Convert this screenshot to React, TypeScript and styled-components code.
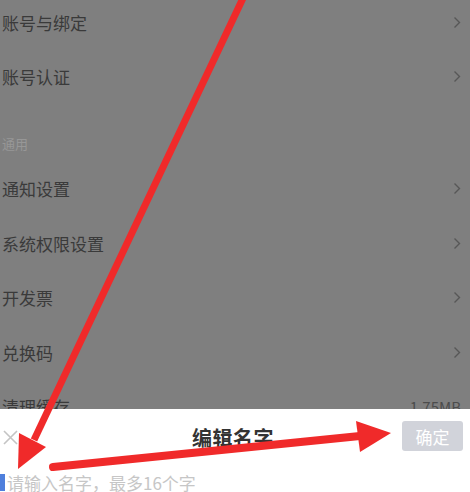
import React from 'react'
import styled, { createGlobalStyle } from 'styled-components'

const GlobalStyle = createGlobalStyle`
  html, body {
    margin: 0;
    padding: 0;
  }
  body {
    font-family: "Noto Sans CJK SC", "Noto Sans", sans-serif;
    background: #7f7f7f;
  }
`

const Screen = styled.div`
  position: relative;
  width: 470px;
  height: 492px;
  overflow: hidden;
  background: #7f7f7f;
`

const List = styled.div`
  display: flex;
  flex-direction: column;
  margin-top: -5px;
`

const Row = styled.div`
  display: flex;
  align-items: center;
  justify-content: space-between;
  height: 54.5px;
  padding: 0 9px 0 2px;
  font-size: 17px;
  color: #3a3a3a;
`

const Section = styled.div`
  height: 57.5px;
  box-sizing: border-box;
  padding: 31px 0 0 2px;
  font-size: 13px;
  line-height: 18px;
  color: #979797;
`

const Extra = styled.span`
  font-size: 15px;
  color: #4c4c4c;
`

const Chevron = () => (
  <svg width="8" height="13" viewBox="0 0 8 13">
    <path d="M1.5 1.5 L6.5 6.5 L1.5 11.5" fill="none" stroke="#575757" strokeWidth="1.4" />
  </svg>
)

const Sheet = styled.div`
  position: absolute;
  left: 0;
  right: 0;
  top: 409px;
  bottom: 0;
  background: #fff;
  display: flex;
  flex-direction: column;
`

const SheetHeader = styled.div`
  display: grid;
  grid-template-columns: 1fr auto 1fr;
  align-items: center;
  height: 56px;
  padding: 0 7px 0 3px;
`

const Close = styled.div`
  display: flex;
  align-items: center;
`

const Title = styled.div`
  font-size: 20px;
  font-weight: 700;
  color: #333;
  letter-spacing: 0.5px;
`

const Confirm = styled.button`
  justify-self: end;
  width: 61px;
  height: 30px;
  border: none;
  border-radius: 3px;
  background: #d1d3da;
  color: #fff;
  font-family: inherit;
  font-size: 17px;
  padding: 0;
  margin-top: -2px;
`

const InputRow = styled.div`
  display: flex;
  align-items: center;
  height: 20px;
  margin-top: 7px;
`

const Caret = styled.span`
  width: 5px;
  height: 17px;
  background: #4f7fdc;
`

const Placeholder = styled.span`
  font-size: 17px;
  color: #c6c6c6;
  margin-left: 2px;
  white-space: nowrap;
`

const Marks = styled.svg`
  position: absolute;
  left: 0;
  top: 0;
  pointer-events: none;
`

type Item = { label: string; extra?: string }

const account: Item[] = [
  { label: '账号与绑定' },
  { label: '账号认证' },
]

const general: Item[] = [
  { label: '通知设置' },
  { label: '系统权限设置' },
  { label: '开发票' },
  { label: '兑换码' },
  { label: '清理缓存', extra: '1.75MB' },
]

const SettingRow = ({ label, extra }: Item) => (
  <Row>
    <span>{label}</span>
    {extra ? <Extra>{extra}</Extra> : <Chevron />}
  </Row>
)

export default function App() {
  return (
    <Screen>
      <GlobalStyle />
      <List>
        {account.map(r => <SettingRow key={r.label} {...r} />)}
        <Section>通用</Section>
        {general.map(r => <SettingRow key={r.label} {...r} />)}
      </List>

      <Sheet>
        <SheetHeader>
          <Close>
            <svg width="15" height="15" viewBox="0 0 15 15">
              <path d="M1 1 L14 14 M14 1 L1 14" stroke="#c4c4c4" strokeWidth="1.6" />
            </svg>
          </Close>
          <Title>编辑名字</Title>
          <Confirm>确定</Confirm>
        </SheetHeader>
        <InputRow>
          <Caret />
          <Placeholder>请输入名字，最多16个字</Placeholder>
        </InputRow>
      </Sheet>

      {/* red annotation arrows drawn on top */}
      <Marks width="470" height="492" viewBox="0 0 470 492">
        <line x1="244" y1="-4" x2="34" y2="440" stroke="#f02a2a" strokeWidth="7" />
        <polygon points="18,469 19,433 46,447" fill="#f02a2a" />
        <line x1="53" y1="467" x2="360" y2="436" stroke="#f02a2a" strokeWidth="8" strokeLinecap="round" />
        <polygon points="391,433 356,421 360,452" fill="#f02a2a" />
      </Marks>
    </Screen>
  )
}
